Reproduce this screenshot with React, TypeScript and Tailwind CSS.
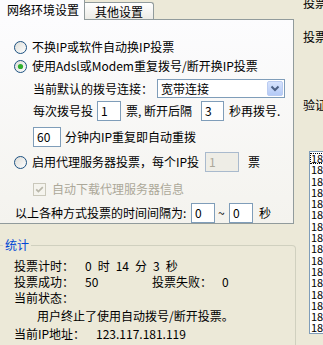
import React from 'react';

const Radio = ({ checked = false }: { checked?: boolean }) => (
  <svg width="13" height="13" viewBox="0 0 13 13" className="shrink-0">
    <defs>
      <linearGradient id="radioFill" x1="0" y1="0" x2="1" y2="1">
        <stop offset="0" stopColor="#DCDCD7" />
        <stop offset="1" stopColor="#FFFFFF" />
      </linearGradient>
    </defs>
    <circle cx="6.5" cy="6.5" r="6" fill="url(#radioFill)" stroke="#1C5180" />
    {checked && <circle cx="6.5" cy="6.5" r="2.6" fill="#2FAE2C" />}
  </svg>
);

const CheckDisabled = () => (
  <svg width="13" height="13" viewBox="0 0 13 13" className="shrink-0">
    <rect x="0.5" y="0.5" width="12" height="12" fill="#F5F4EE" stroke="#CAC8BB" />
    <path d="M3.2 6.4 L5.4 8.6 L9.8 4.2" fill="none" stroke="#B9B7AA" strokeWidth="1.7" />
  </svg>
);

const TextBox = ({ value, w, disabled = false }: { value: string; w: string; disabled?: boolean }) => (
  <div
    className={`${w} h-[20px] shrink-0 border pl-[3px] pt-[2px] leading-[13px] ${
      disabled ? 'border-[#A9BACD] bg-[#EEEDE6] text-[#ACA899]' : 'border-[#7F9DB9] bg-white'
    }`}
  >
    {value}
  </div>
);

const ipList = [
  '183.117.181.119',
  '183.117.176.42',
  '183.117.190.8',
  '183.117.162.215',
  '183.117.185.63',
  '183.117.170.94',
  '183.117.188.131',
  '183.117.179.27',
  '183.117.166.200',
  '183.117.183.55',
  '183.117.174.18',
  '183.117.191.146',
  '183.117.168.77',
  '183.117.187.9',
  '183.117.172.233',
  '183.117.181.50',
];

export default function App() {
  return (
    <div className="w-[323px] h-[345px] overflow-hidden bg-[#ECE9D8] flex text-[12px] leading-[12px] text-black font-['Noto_Sans_CJK_SC',sans-serif]">
      {/* Left: tab control + statistics */}
      <div className="w-[296px] shrink-0 flex flex-col">
        {/* Tabs */}
        <div className="h-[19px] flex items-end relative z-10">
          <div className="w-[85px] h-[20px] mb-[-1px] bg-[#FCFCFE] border-r border-[#919B9C] flex items-center pl-[7px] pb-[1px]">
            网络环境设置
          </div>
          <div className="w-[69px] h-[17px] bg-linear-to-b from-white to-[#ECEBE6] border-t border-r border-[#919B9C] rounded-tr-[3px] flex items-center pl-[10px] pt-[1px]">
            其他设置
          </div>
        </div>

        {/* Tab page */}
        <div className="h-[210px] w-[294px] border border-l-0 border-[#919B9C] bg-linear-to-b from-[#FCFCFE] to-[#F4F3EE] flex flex-col">
          <div className="mt-[18px] h-[18px] flex items-center pl-[14px]">
            <Radio />
            <span className="ml-[5px]">不换IP或软件自动换IP投票</span>
          </div>
          <div className="mt-[1px] h-[18px] flex items-center pl-[14px]">
            <Radio checked />
            <span className="ml-[5px]">使用Adsl或Modem重复拨号/断开换IP投票</span>
          </div>
          <div className="mt-[4px] h-[19px] flex items-center pl-[33px]">
            <span className="w-[124px] shrink-0">当前默认的拨号连接：</span>
            <div className="w-[128px] h-[19px] border border-[#7F9DB9] bg-white flex items-center justify-between pl-[3px] pr-[1px]">
              <span>宽带连接</span>
              <svg width="16" height="15" viewBox="0 0 16 15">
                <defs>
                  <linearGradient id="ddBtn" x1="0" y1="0" x2="0" y2="1">
                    <stop offset="0" stopColor="#D8E4FD" />
                    <stop offset="1" stopColor="#B3C9F6" />
                  </linearGradient>
                </defs>
                <rect x="0.5" y="0.5" width="15" height="14" rx="1.5" fill="url(#ddBtn)" stroke="#BBCCF1" />
                <path d="M4.5 5.5 L8 9 L11.5 5.5" fill="none" stroke="#4D6185" strokeWidth="2" />
              </svg>
            </div>
          </div>
          <div className="mt-[3px] h-[20px] flex items-center pl-[33px]">
            <span className="w-[64px] shrink-0">每次拨号投</span>
            <TextBox value="1" w="w-[24px]" />
            <span className="ml-[5px] w-[75px] shrink-0">票, 断开后隔</span>
            <TextBox value="3" w="w-[23px]" />
            <span className="ml-[5px]">秒再拨号.</span>
          </div>
          <div className="mt-[6px] h-[20px] flex items-center pl-[33px]">
            <TextBox value="60" w="w-[28px]" />
            <span className="ml-[4px]">分钟内IP重复即自动重拨</span>
          </div>
          <div className="mt-[5px] h-[20px] flex items-center pl-[14px]">
            <Radio />
            <span className="ml-[5px] w-[173px] shrink-0">启用代理服务器投票，每个IP投</span>
            <TextBox value="1" w="w-[34px]" disabled />
            <span className="ml-[9px]">票</span>
          </div>
          <div className="mt-[10px] h-[14px] flex items-center pl-[33px]">
            <CheckDisabled />
            <span className="ml-[6px] text-[#ACA899]">自动下载代理服务器信息</span>
          </div>
          <div className="mt-[7px] h-[20px] flex items-center pl-[15px]">
            <span className="w-[176px] shrink-0">以上各种方式投票的时间间隔为:</span>
            <TextBox value="0" w="w-[24px]" />
            <span className="w-[14px] shrink-0 pl-[3px]">~</span>
            <TextBox value="0" w="w-[24px]" />
            <span className="ml-[6px]">秒</span>
          </div>
        </div>

        {/* Statistics group */}
        <fieldset className="mt-[15px] w-[296px] h-[140px] shrink-0 border border-l-0 border-[#D0D0BF] rounded-tr-[4px]">
          <legend className="ml-[3px] px-[2px] leading-[12px] text-[#0046D5]">统计</legend>
          <div className="pt-[7px] pl-[14px] flex flex-col">
            <div className="h-[16px] flex items-center">
              <span className="w-[71px] shrink-0">投票计时：</span>
              <div className="flex gap-[6px]">
                <span>0</span>
                <span>时</span>
                <span>14</span>
                <span>分</span>
                <span>3</span>
                <span>秒</span>
              </div>
            </div>
            <div className="h-[16px] flex items-center">
              <span className="w-[71px] shrink-0">投票成功：</span>
              <span className="w-[67px] shrink-0">50</span>
              <span className="w-[70px] shrink-0">投票失败：</span>
              <span>0</span>
            </div>
            <div className="h-[16px] flex items-center">当前状态：</div>
            <div className="mt-[2px] h-[16px] flex items-center pl-[23px]">用户终止了使用自动拨号/断开投票。</div>
            <div className="mt-[2px] h-[16px] flex items-center">
              <span className="w-[82px] shrink-0">当前IP地址：</span>
              <span>123.117.181.119</span>
            </div>
          </div>
        </fieldset>
      </div>

      {/* Right: neighbouring panel, cut off by the window edge */}
      <div className="ml-[7px] w-[80px] shrink-0 flex flex-col">
        <div className="mt-[-3px] h-[12px] whitespace-nowrap">投票数</div>
        <div className="mt-[22px] h-[12px] whitespace-nowrap">投票地址</div>
        <div className="mt-[56px] h-[12px] whitespace-nowrap">验证码</div>
        <div className="mt-[40px] ml-[6px] h-[183px] border border-[#7F9DB9] bg-white flex flex-col pt-[1px] text-[11px]">
          {ipList.map((ip, i) => (
            <div
              key={ip}
              className={`h-[11.3px] leading-[11.3px] pl-[1px] whitespace-nowrap ${
                i === 0 ? 'outline outline-1 outline-dotted outline-black -outline-offset-1' : ''
              }`}
            >
              {ip}
            </div>
          ))}
        </div>
      </div>
    </div>
  );
}
